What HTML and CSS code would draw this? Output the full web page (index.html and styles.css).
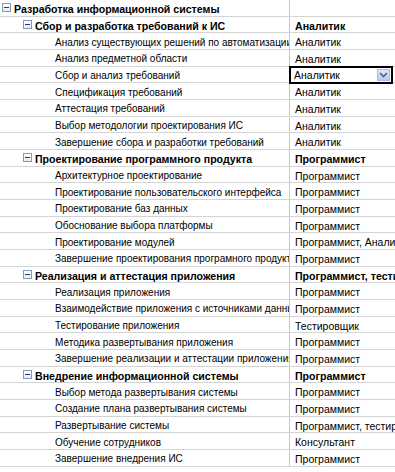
FILE: index.html
```html
<!DOCTYPE html>
<html>
<head>
<meta charset="utf-8">
<link rel="stylesheet" href="styles.css">
</head>
<body>
<div class="tree">
  <div class="row group l0"><div class="name"><span class="tog"></span><span class="txt">Разработка информационной системы</span></div><div class="role"></div></div>
  <div class="row group l1"><div class="name"><span class="tog"></span><span class="txt">Сбор и разработка требований к ИС</span></div><div class="role">Аналитик</div></div>
  <div class="row l2"><div class="name"><span class="txt">Анализ существующих решений по автоматизации</span></div><div class="role">Аналитик</div></div>
  <div class="row l2"><div class="name"><span class="txt">Анализ предметной области</span></div><div class="role">Аналитик</div></div>
  <div class="row l2"><div class="name"><span class="txt">Сбор и анализ требований</span></div><div class="role edit"><span class="val">Аналитик</span><span class="btn"><svg width="9" height="6" viewBox="0 0 9 6"><path d="M1 1 L4.5 4.5 L8 1" fill="none" stroke="#4d6185" stroke-width="1.6"/></svg></span></div></div>
  <div class="row l2"><div class="name"><span class="txt">Спецификация требований</span></div><div class="role">Аналитик</div></div>
  <div class="row l2"><div class="name"><span class="txt">Аттестация требований</span></div><div class="role">Аналитик</div></div>
  <div class="row l2"><div class="name"><span class="txt">Выбор методологии проектирования ИС</span></div><div class="role">Аналитик</div></div>
  <div class="row l2"><div class="name"><span class="txt">Завершение сбора и разработки требований</span></div><div class="role">Аналитик</div></div>
  <div class="row group l1"><div class="name"><span class="tog"></span><span class="txt">Проектирование программного продукта</span></div><div class="role">Программист</div></div>
  <div class="row l2"><div class="name"><span class="txt">Архитектурное проектирование</span></div><div class="role">Программист</div></div>
  <div class="row l2"><div class="name"><span class="txt">Проектирование пользовательского интерфейса</span></div><div class="role">Программист</div></div>
  <div class="row l2"><div class="name"><span class="txt">Проектирование баз данных</span></div><div class="role">Программист</div></div>
  <div class="row l2"><div class="name"><span class="txt">Обоснование выбора платформы</span></div><div class="role">Программист</div></div>
  <div class="row l2"><div class="name"><span class="txt">Проектирование модулей</span></div><div class="role">Программист, Аналитик</div></div>
  <div class="row l2"><div class="name"><span class="txt">Завершение проектирования програмного продукта</span></div><div class="role">Программист</div></div>
  <div class="row group l1"><div class="name"><span class="tog"></span><span class="txt">Реализация и аттестация приложения</span></div><div class="role">Программист, тестировщик</div></div>
  <div class="row l2"><div class="name"><span class="txt">Реализация приложения</span></div><div class="role">Программист</div></div>
  <div class="row l2"><div class="name"><span class="txt">Взаимодействие приложения с источниками данных</span></div><div class="role">Программист</div></div>
  <div class="row l2"><div class="name"><span class="txt">Тестирование приложения</span></div><div class="role">Тестировщик</div></div>
  <div class="row l2"><div class="name"><span class="txt">Методика развертывания приложения</span></div><div class="role">Программист</div></div>
  <div class="row l2"><div class="name"><span class="txt">Завершение реализации и аттестации приложения</span></div><div class="role">Программист</div></div>
  <div class="row group l1"><div class="name"><span class="tog"></span><span class="txt">Внедрение информационной системы</span></div><div class="role">Программист</div></div>
  <div class="row l2"><div class="name"><span class="txt">Выбор метода развертывания системы</span></div><div class="role">Программист</div></div>
  <div class="row l2"><div class="name"><span class="txt">Создание плана развертывания системы</span></div><div class="role">Программист</div></div>
  <div class="row l2"><div class="name"><span class="txt">Развертывание системы</span></div><div class="role">Программист, тестировщик</div></div>
  <div class="row l2"><div class="name"><span class="txt">Обучение сотрудников</span></div><div class="role">Консультант</div></div>
  <div class="row l2"><div class="name"><span class="txt">Завершение внедрения ИС</span></div><div class="role">Программист</div></div>
</div>
</body>
</html>
```

FILE: styles.css
```css
html, body {
  margin: 0;
  padding: 0;
  background: #ffffff;
}
body {
  width: 395px;
  height: 472px;
  overflow: hidden;
  font-family: "Liberation Sans", Arial, sans-serif;
  font-size: 10px;
  color: #000;
}
.tree {
  display: flex;
  flex-direction: column;
}
.row {
  display: flex;
  height: 16.68px;
  box-sizing: border-box;
  border-bottom: 1px solid #d4d4d4;
  flex-shrink: 0;
}
.name {
  width: 290px;
  flex-shrink: 0;
  box-sizing: border-box;
  border-right: 1px solid #c8c8c8;
  display: flex;
  align-items: center;
  padding-top: 2px;
  overflow: hidden;
  white-space: nowrap;
}
.l0 .name { padding-left: 2px; }
.l1 .name { padding-left: 23px; }
.l2 .name { padding-left: 55px; }
.tog {
  width: 9px;
  height: 9px;
  box-sizing: border-box;
  border: 1px solid #7f9db9;
  background: linear-gradient(#ffffff, #e6eaf2);
  position: relative;
  flex-shrink: 0;
  margin-right: 3px;
  margin-top: -2px;
}
.tog::after {
  content: "";
  position: absolute;
  left: 1px;
  top: 3px;
  width: 5px;
  height: 1px;
  background: #1c3a7a;
}
.group { font-weight: bold; font-size: 10.6px; }
.role {
  flex: 1;
  padding-left: 5px;
  padding-top: 2px;
  display: flex;
  align-items: center;
  overflow: hidden;
  white-space: nowrap;
  font-size: 10.5px;
}
.group .role { font-size: 10.6px; }
.role.edit {
  position: relative;
  border: 2px solid #000;
  margin: -1px 2px -2px -1px;
  padding-left: 3px;
  padding-top: 0;
  justify-content: space-between;
  background: #fff;
}
.btn {
  width: 13px;
  height: 12px;
  margin-right: 1px;
  box-sizing: border-box;
  border: 1px solid #a6bde6;
  background: linear-gradient(#dfe8fb, #b9cbf3);
  display: flex;
  align-items: center;
  justify-content: center;
}
```
